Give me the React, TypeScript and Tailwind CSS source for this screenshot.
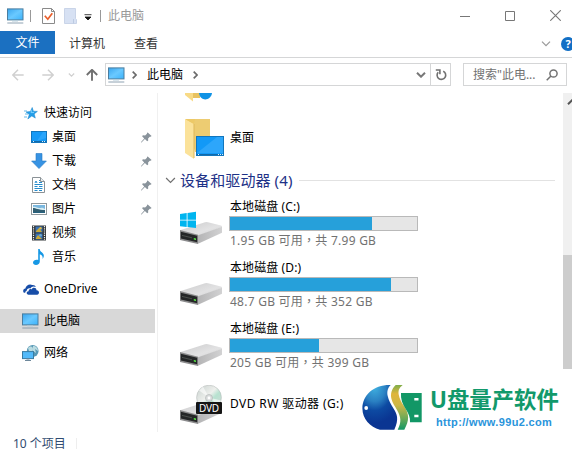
import type { ReactNode } from 'react';

interface Drive {
  name: string;
  detail: string;
  used: number;
  system?: boolean;
}

const DRIVES: Drive[] = [
  { name: '本地磁盘 (C:)', detail: '1.95 GB 可用，共 7.99 GB', used: 76, system: true },
  { name: '本地磁盘 (D:)', detail: '48.7 GB 可用，共 352 GB', used: 86 },
  { name: '本地磁盘 (E:)', detail: '205 GB 可用，共 399 GB', used: 47.6 },
];

function PcIcon({ className }: { className: string }) {
  return (
    <svg viewBox="0 0 17 16" className={className} aria-hidden="true">
      <defs>
        <linearGradient id="pc-screen" x1="0" y1="0" x2="1" y2="1">
          <stop offset="0" stopColor="#39a5ee" />
          <stop offset="0.5" stopColor="#6ac9ff" />
          <stop offset="1" stopColor="#3ab2fb" />
        </linearGradient>
      </defs>
      <rect x="0.5" y="0.9" width="15.5" height="11" fill="url(#pc-screen)" stroke="#4a7d9f" />
      <path d="M5 13h6" stroke="#b5cddb" strokeWidth="1" />
      <path d="M0.3 15h16" stroke="#8197a9" strokeWidth="0.9" />
    </svg>
  );
}

function StarIcon() {
  return (
    <svg viewBox="0 0 14 13" className="h-[13px] w-[14px]" aria-hidden="true">
      <path d="M8.2 0.5l1.2 3.7 4 .2-3.2 2.5 1.1 4.2-3.5-2.2-4 3.1 1.5-4.4L2 4.9l4.4-.4z" fill="#249ee8" stroke="#1784cd" strokeWidth="0.5" />
      <path d="M0 4h3M1 7h3M0 10h3" stroke="#65b9e9" strokeWidth="1" />
      <path d="M7.8 3l-.8 2.6 3-.1" stroke="#7ed3ff" strokeWidth="0.9" fill="none" />
    </svg>
  );
}

function DesktopIcon() {
  return (
    <svg viewBox="0 0 16 12" className="h-3 w-4" aria-hidden="true">
      <rect x="0.5" y="0.5" width="15" height="11" fill="#1599f6" stroke="#1276bd" />
      <path d="M12 1h3v6L6 10z" fill="#38adff" opacity="0.6" />
      <path d="M1 10.5h14" stroke="#1269a9" />
      <path d="M2 10.5h1M11 10.5h1M13 10.5h1" stroke="#d8f3ff" />
    </svg>
  );
}

function DownloadIcon() {
  return (
    <svg viewBox="0 0 16 16" className="size-4" aria-hidden="true">
      <path d="M5 .5h6V8h4.4L8 15.6.6 8H5z" fill="#3793e3" stroke="#2779c5" strokeWidth="0.6" />
    </svg>
  );
}

function DocumentIcon() {
  return (
    <svg viewBox="0 0 13 16" className="h-4 w-[13px]" aria-hidden="true">
      <path d="M.5.5h8l4 4v11H.5z" fill="#fff" stroke="#8b9296" />
      <path d="M8.5.5v4h4" fill="#e9edef" stroke="#8b9296" />
      <path d="M3 6l1-2 1 2M7 3.5h1M7 5.5h3M2.5 7.5h8M2.5 9.5h3M7 9.5h3.5M2.5 11.5h8M2.5 13.5h3M7 13.5h3" fill="none" stroke="#258ccd" strokeWidth="1" />
    </svg>
  );
}

function PictureIcon() {
  return (
    <svg viewBox="0 0 16 12" className="h-3 w-4" aria-hidden="true">
      <rect x="0.5" y="0.5" width="15" height="11" fill="#fff" stroke="#8f989c" />
      <path d="M2 2h12v8H2z" fill="#79b7df" />
      <path d="M2 4c3-1 4 1 6 1s3-1 6 1v1H2z" fill="#d8edf3" />
      <path d="M2 5c3 0 5 2 12 2v3H2z" fill="#315e72" />
      <path d="M2 9h12v1H2z" fill="#25617e" />
    </svg>
  );
}

function VideoIcon() {
  return (
    <svg viewBox="0 0 14 16" className="h-4 w-3.5" aria-hidden="true">
      <path d="M0 .5h14v15H0z" fill="#34383a" />
      <path d="M1.5 1v14M12.5 1v14" stroke="#edf1f3" strokeWidth="1.2" strokeDasharray="1.2 1" />
      <path d="M3.5 1.5h7v6h-7zM3.5 8.5h7v6h-7z" fill="#3a72b4" />
      <path d="M4 6l3-3 3 4H4zM4 13l2-3 4 4H4z" fill="#cbaa37" />
      <circle cx="8.5" cy="3.2" r="1.2" fill="#e0bb46" />
      <circle cx="8.5" cy="10.3" r="1.3" fill="#6daad5" />
    </svg>
  );
}

function MusicIcon() {
  return (
    <svg viewBox="0 0 12 16" className="h-4 w-3" aria-hidden="true">
      <path d="M5.2 0h1.5c.2 3.4 4.5 3.4 4.1 7.2-.1 1.2-.7 2-1.3 2.7.7-2.7-.8-3.9-2.7-4.7v7.3c0 2.1-1.8 3.4-3.8 3.4C1.2 15.9 0 15 0 13.5c0-2 2.8-3.3 5.2-2.5z" fill="#1698e5" />
    </svg>
  );
}

function CloudIcon() {
  return (
    <svg viewBox="0 0 16 11" className="h-[11px] w-4" aria-hidden="true">
      <path d="M.9 8.7C-.6 7 .4 4.8 2.4 4.6 2.7 1.5 6.5-.5 9.2 1.1c1.4-.4 3.2.5 3.6 1.9-2.3-1.3-4.6-.2-5.3 1.4-2.2-.7-4 .9-3.9 2.7-1 .2-1.4.9-1.3 1.7z" fill="#174da8" />
      <path d="M5.5 10.7c-2.4 0-2.5-3.2.1-3.4-.1-1.9 1.8-2.7 3-1.9.7-2.3 4.8-2.3 4.9.8 3-.2 3.4 4.3.6 4.5z" fill="#174da8" />
    </svg>
  );
}

function NetworkIcon() {
  return (
    <svg viewBox="0 0 17 16" className="h-4 w-[17px]" aria-hidden="true">
      <circle cx="10.7" cy="6" r="5.9" fill="#5798b5" />
      <path d="M6 3c3-3 5-1 5 1 0 3-2 3-3 5M11 1c3 0 5 2 5 5l-3-2 1 4-3-2" fill="#badbe1" />
      <rect x="0.5" y="6.6" width="11" height="7" fill="#53bafa" stroke="#397ca3" />
      <path d="M4.5 14h3M3 15.5h6" stroke="#6e889b" />
    </svg>
  );
}

function PinIcon() {
  return (
    <svg viewBox="0 0 11 11" className="h-[11px] w-[11px]" aria-hidden="true">
      <path d="M6.7.4l3.9 3.7-1 .7-.8-.1-1.7 1.8.1 2-1 .8-2.3-2.2L.5 10.4 0 10.6l.1-.6 3.1-3.6L1.1 4.3l.8-1 2.2.2L6 1.7 5.9.9z" fill="#89939b" />
    </svg>
  );
}

function DriveIcon({ system, dvd }: { system?: boolean; dvd?: boolean }) {
  return (
    <svg viewBox="0 0 42 40" className="h-10 w-[42px] shrink-0" aria-hidden="true">
      <defs>
        <linearGradient id="drive-top" x1="0" y1="0" x2="1" y2="1">
          <stop offset="0" stopColor="#cbcbcc" />
          <stop offset="0.6" stopColor="#e2e2e3" />
          <stop offset="1" stopColor="#d0d0d1" />
        </linearGradient>
        <linearGradient id="drive-side" x1="0" y1="0" x2="1" y2="0">
          <stop offset="0" stopColor="#b4b4b5" />
          <stop offset="1" stopColor="#d2d2d3" />
        </linearGradient>
        <linearGradient id="disc" x1="0" y1="0" x2="1" y2="1">
          <stop offset="0" stopColor="#c7d0cd" />
          <stop offset="0.45" stopColor="#eef0ed" />
          <stop offset="0.6" stopColor="#b7e2d0" />
          <stop offset="1" stopColor="#d6d8d8" />
        </linearGradient>
      </defs>
      <path d="M0 25.2L25 17.2q1.5-.4 3 0L41 20.5q1 .3 1 1.5L18 31z" fill="url(#drive-top)" />
      <path d="M17.5 30.5L42 21.7v6L17.5 39z" fill="url(#drive-side)" />
      <path d="M0 25l18 4.8V39L0 35z" fill="#8b8b8c" />
      <path d="M0.8 26.8l16.4 4v6.4L0.8 33.4z" fill="#242627" />
      <path d="M2 30.4l10 2.4" stroke="#555a57" strokeWidth="0.8" />
      <path d="M13.8 33l2.2.5v1.6l-2.2-.5z" fill="#57ee45" />
      {system ? (
        <path d="M0 9.1l6.7-1v6.6H0zM7.5 8L16 6.8v7.9H7.5zM0 15.5h6.7v6.6L0 21.2zM7.5 15.5H16V23l-8.5-1z" fill="#00b5ef" />
      ) : null}
      {dvd ? (
        <>
          <circle cx="29" cy="12.6" r="12.4" fill="url(#disc)" stroke="#b8bdbc" strokeWidth="0.6" />
          <path d="M29 12.6l-10-7 4-4zM29 12.6l9 8 3-5z" fill="#fff" opacity="0.6" />
          <circle cx="29" cy="13" r="3.5" fill="#dadddd" stroke="#aaafae" strokeWidth="0.6" />
          <circle cx="29" cy="13" r="1.4" fill="#fff" />
          <rect x="16" y="17" width="26" height="12" rx="1" fill="#151515" />
          <text x="29" y="26.7" textAnchor="middle" textLength="20" fontFamily="Noto Sans, sans-serif" fontSize="10" fill="#fff">
            DVD
          </text>
        </>
      ) : null}
    </svg>
  );
}

function Chevron({ className, width = 1.5 }: { className: string; width?: number }) {
  return (
    <svg viewBox="0 0 10 6" className={className} fill="none" stroke="currentColor" strokeWidth={width} aria-hidden="true">
      <path d="M1 .7l4 4 4-4" />
    </svg>
  );
}

function ArrowIcon({ className, width = 1.5 }: { className: string; width?: number }) {
  return (
    <svg viewBox="0 0 12 12" className={className} fill="none" stroke="currentColor" strokeWidth={width} aria-hidden="true">
      <path d="M11.7 6H1M6 .8L.8 6 6 11.2" />
    </svg>
  );
}

function Crumb() {
  return (
    <svg viewBox="0 0 5 8" className="h-2 w-[5px] shrink-0 text-[#6b6b6b]" fill="none" stroke="currentColor" strokeWidth="1.7" aria-hidden="true">
      <path d="M.7.7L4 4 .7 7.3" />
    </svg>
  );
}

function TitleBar() {
  return (
    <header className="flex h-[31px] items-center pl-[7px]">
      <PcIcon className="h-4 w-[17px]" />
      <div className="ml-[6px] h-3 w-px bg-[#999]" />
      <svg viewBox="0 0 13 16" className="ml-[11px] h-4 w-[13px]" aria-hidden="true">
        <path d="M.5.5h9l3 3v12H.5z" fill="#fff" stroke="#8a8a8a" />
        <path d="M9.5.5v3h3" fill="none" stroke="#8a8a8a" />
        <path d="M2.8 7.7l3 3.5 4.5-6" fill="none" stroke="#e95e2a" strokeWidth="1.7" />
      </svg>
      <svg viewBox="0 0 13 16" className="ml-[9px] h-4 w-[13px]" aria-hidden="true">
        <path d="M.5.5h11v10l1 1v4H.5z" fill="#d7e1f3" stroke="#c9d4e8" />
        <path d="M9.5 11v4.5" stroke="#bccbe2" />
      </svg>
      <svg viewBox="0 0 8 7" className="ml-[7px] mt-1 h-[7px] w-2" aria-hidden="true">
        <path d="M.5.7h7M1 3h6L4 6z" fill="#111" stroke="#111" strokeWidth="0.8" />
      </svg>
      <div className="ml-2 h-3 w-px bg-[#999]" />
      <span className="ml-[7px] text-[#999]">此电脑</span>
      <div className="ml-auto flex items-center gap-[35px] pr-[11px] text-[#777]">
        <svg viewBox="0 0 10 10" className="size-[10px]" stroke="currentColor" aria-hidden="true"><path d="M0 5.5h10" /></svg>
        <svg viewBox="0 0 10 10" className="size-[10px]" fill="none" stroke="currentColor" aria-hidden="true"><path d="M.5.5h9v9h-9z" /></svg>
        <svg viewBox="0 0 10 10" className="size-[11px]" fill="none" stroke="currentColor" aria-hidden="true"><path d="M.2.2l9.6 9.6M9.8.2L.2 9.8" /></svg>
      </div>
    </header>
  );
}

function RibbonTabs() {
  return (
    <nav className="flex h-[27px] items-start overflow-hidden border-b border-[#d5d6d7]">
      <div className="flex h-[23px] w-[55px] items-center justify-center bg-[#1b70c1] pt-px text-white">文件</div>
      <div className="ml-[14px] flex h-[25px] items-center text-[#333]">计算机</div>
      <div className="ml-[29px] flex h-[25px] items-center text-[#333]">查看</div>
      <Chevron className="ml-auto mt-[10px] h-[6px] w-[10px] text-[#999]" width={1.2} />
      <div className="-mr-[3px] ml-[10px] mt-[6px] flex size-[14px] items-center justify-center rounded-full bg-[#126fc5] text-[11px] font-bold text-white">?</div>
    </nav>
  );
}

function AddressBar() {
  return (
    <div className="flex h-[35px] items-start pt-[5px]">
      <div className="flex h-[23px] w-[105px] items-center pl-3">
        <ArrowIcon className="size-3 text-[#d0d0d0]" />
        <ArrowIcon className="ml-[18px] size-3 rotate-180 text-[#d0d0d0]" />
        <Chevron className="ml-[14px] h-1 w-[7px] text-[#d0d0d0]" width={1.8} />
        <ArrowIcon className="ml-[11px] size-3 rotate-90 text-[#707070]" width={1.9} />
      </div>
      <div className="flex h-[23px] w-[346px] items-center border border-[#d5d6d7] pl-[2px]">
        <PcIcon className="h-4 w-[17px]" />
        <div className="ml-[7px]"><Crumb /></div>
        <span className="ml-[10px]">此电脑</span>
        <div className="ml-[10px]"><Crumb /></div>
        <Chevron className="ml-auto mr-[4px] h-[6px] w-[10px] text-[#777]" width={2} />
        <div className="flex h-full w-5 items-center justify-center border-l border-[#d5d6d7]">
          <svg viewBox="0 0 12 12" className="h-3 w-3 text-[#707070]" fill="none" stroke="currentColor" strokeWidth="1.6" aria-hidden="true">
            <path d="M8.2 2.2a4.3 4.3 0 1 1-5 1M.8 1h4.1v4.2" />
          </svg>
        </div>
      </div>
      <div className="ml-3 flex h-[23px] w-[104px] items-center border border-[#d5d6d7] pl-[9px] text-[#727272]">
        <span className="whitespace-nowrap">搜索"此电...</span>
        <svg viewBox="0 0 12 12" className="ml-auto mr-2 h-3 w-3" fill="none" stroke="currentColor" strokeWidth="1.5" aria-hidden="true">
          <circle cx="7.5" cy="4.5" r="3.6" />
          <path d="M5 7L.7 11.3" />
        </svg>
      </div>
    </div>
  );
}

interface NavRowProps {
  icon: ReactNode;
  label: string;
  nested?: boolean;
  pinned?: boolean;
  selected?: boolean;
}

function NavRow({ icon, label, nested, pinned, selected }: NavRowProps) {
  return (
    <div className={`flex h-6 w-[155px] items-center ${nested ? 'pl-[30px]' : 'pl-[22px]'} ${selected ? 'bg-[#d8d8d8]' : ''}`}>
      <div className="mr-[5px] flex w-[17px] justify-center">{icon}</div>
      <span className="tracking-[0.03px]">{label}</span>
      {pinned ? <div className="ml-auto mr-[3px]"><PinIcon /></div> : null}
    </div>
  );
}

function Sidebar() {
  return (
    <aside className="h-[339px] w-[158px] shrink-0 border-r border-[#f0f0f0] pt-2">
      <NavRow icon={<StarIcon />} label="快速访问" />
      <NavRow nested pinned icon={<DesktopIcon />} label="桌面" />
      <NavRow nested pinned icon={<DownloadIcon />} label="下载" />
      <NavRow nested pinned icon={<DocumentIcon />} label="文档" />
      <NavRow nested pinned icon={<PictureIcon />} label="图片" />
      <NavRow nested icon={<VideoIcon />} label="视频" />
      <NavRow nested icon={<MusicIcon />} label="音乐" />
      <div className="mt-2 flex flex-col gap-2">
        <NavRow icon={<CloudIcon />} label="OneDrive" />
        <NavRow selected icon={<PcIcon className="h-4 w-[17px]" />} label="此电脑" />
        <NavRow icon={<NetworkIcon />} label="网络" />
      </div>
    </aside>
  );
}

function DriveRow({ drive }: { drive: Drive }) {
  return (
    <div className="flex h-[61px]">
      <div className="pt-[6px]"><DriveIcon system={drive.system} /></div>
      <div className="ml-[7px] w-[189px]">
        <div className="h-[17px] pl-[1px] leading-[15px] tracking-[0.1px]">{drive.name}</div>
        <div className="h-[15px] border border-[#b9b9b9] bg-[#e6e6e6]">
          <div className="h-full bg-[#26a0da]" style={{ width: `${drive.used}%` }} />
        </div>
        <div className="whitespace-nowrap pl-[1px] font-['Noto_Sans','Noto_Sans_CJK_TC',sans-serif] leading-[19px] tracking-[0.25px] text-[#727272]">
          {drive.detail}
        </div>
      </div>
    </div>
  );
}

function FileArea() {
  return (
    <main className="h-[339px] flex-1 overflow-hidden">
      <svg viewBox="0 0 40 9" className="ml-[27px] h-[9px] w-10" aria-hidden="true">
        <path d="M0 0h8v8.5L0 2z" fill="#f8da86" />
        <path d="M8 0h7v5H8z" fill="#e8c260" />
        <path d="M14 0h13c-1 8-12 9-13 0z" fill="#1093e5" />
      </svg>
      <div className="ml-[27px] mt-4 flex h-[42px]">
        <svg viewBox="0 0 40 41" className="h-[41px] w-10" aria-hidden="true">
          <path d="M1 1h24v33H10z" fill="#edcc72" />
          <path d="M0 1l9 5v35L0 35z" fill="#fbe29a" />
          <path d="M9 6v34" stroke="#deb85b" />
          <path d="M0 1h10l-1 5z" fill="#edc967" />
          <rect x="11.5" y="18.5" width="27" height="19" fill="#1299f7" stroke="#1276bd" />
          <path d="M12 35L32 19h6v16z" fill="#2da6fb" />
          <path d="M12 36.5h26" stroke="#1269a9" />
          <path d="M13 36.5h1M33 36.5h1M35 36.5h1M37 36.5h1" stroke="#d4f0ff" />
        </svg>
        <span className="ml-[5px] pt-[11px] leading-[18px]">桌面</span>
      </div>
      <div className="mt-2 flex h-6 items-center pl-[7px] pr-2 text-[15px] text-[#1e3287]">
        <Chevron className="h-[7px] w-[11px] text-[#707070]" width={1.1} />
        <span className="ml-1 whitespace-nowrap tracking-[0.1px]">设备和驱动器 (4)</span>
        <div className="ml-[7px] h-px flex-1 bg-[#e2e2e2]" />
      </div>
      <div className="mt-[7px] pl-[22px]">
        {DRIVES.map((drive) => (
          <DriveRow key={drive.name} drive={drive} />
        ))}
        <div className="flex pt-[3px]">
          <DriveIcon dvd />
          <span className="ml-2 pt-[10px] leading-[18px] tracking-[0.4px]">DVD RW 驱动器 (G:)</span>
        </div>
      </div>
    </main>
  );
}

function Scrollbar() {
  return (
    <div className="flex h-[276px] w-[9px] shrink-0 flex-col justify-between overflow-hidden bg-[#f0f0f0]">
      <Chevron className="ml-1 mt-[6px] h-[6px] w-[10px] rotate-180 text-[#555]" width={2} />
      <div className="h-[114px] bg-[#cdcdcd]" />
    </div>
  );
}

function SiteLogo() {
  return (
    <div className="absolute left-[362px] top-[384px] flex">
      <svg viewBox="0 0 62 48" className="h-12 w-[62px]" aria-hidden="true">
        <defs>
          <radialGradient id="logo-ball" cx="0.35" cy="0.05" r="0.8">
            <stop offset="0" stopColor="#3fb0e0" />
            <stop offset="0.4" stopColor="#2a80c2" />
            <stop offset="0.65" stopColor="#0d4aa2" />
            <stop offset="1" stopColor="#0a3592" />
          </radialGradient>
          <linearGradient id="logo-wave" x1="0" y1="0" x2="0" y2="1">
            <stop offset="0" stopColor="#7fae4b" />
            <stop offset="0.2" stopColor="#e0b53c" />
            <stop offset="0.45" stopColor="#cdb746" />
            <stop offset="0.75" stopColor="#6aa957" />
            <stop offset="1" stopColor="#129766" />
          </linearGradient>
        </defs>
        <path d="M28.7 1C25 4.500 25 9 25.700 12c.8 4 3 8 5.500 12 4 6 6 11 1.100 21.700H18C8 43 .4 35 .4 24.500.4 11 12 .5 28.700 1z" fill="url(#logo-ball)" />
        <path d="M33.700 1h7c-4 3-4.500 6-4 9.500.6 4 3 8.500 5.600 12 5 7.500 5.200 14 0 23.200h-6.600c4-8 3.300-12.700-.7-19.700-2-3.500-4.500-7-5.500-11-1.300-5 .2-10.500 4.200-14z" fill="url(#logo-wave)" />
        <path d="M39 9h20.700v29.300H48c.4-5-1.500-9-4.300-13.300C40.500 20 38.500 15 39 9zM52.300 14v2.500h4.200V14zM52.300 30.800v2.500h4.200v-2.500z" fill="#129766" fillRule="evenodd" />
        <circle cx="4.200" cy="24" r="1.900" fill="#fff" />
      </svg>
      <div className="ml-[6px] flex flex-col">
        <div className="h-[31px] whitespace-nowrap text-[22.400px] font-bold leading-[31px] text-[#12996b]">U盘量产软件</div>
        <div className="ml-[6px] whitespace-nowrap font-['Liberation_Sans'] text-[11px] font-bold leading-[15px] tracking-[0.35px] text-[#2994db]">http://www.99u2.com</div>
      </div>
    </div>
  );
}

export default function App() {
  return (
    <div className="relative flex h-[449px] w-[572px] flex-col overflow-hidden bg-white font-['Noto_Sans','Noto_Sans_CJK_SC',sans-serif] text-xs text-black">
      <TitleBar />
      <RibbonTabs />
      <AddressBar />
      <div className="flex">
        <Sidebar />
        <FileArea />
        <Scrollbar />
      </div>
      <footer className="flex h-[17px] shrink-0 items-end pl-[13px] text-[#304b70]">
        <span className="w-[64px] border-r border-[#eee] leading-[11px]">10 个项目</span>
      </footer>
      <SiteLogo />
    </div>
  );
}
